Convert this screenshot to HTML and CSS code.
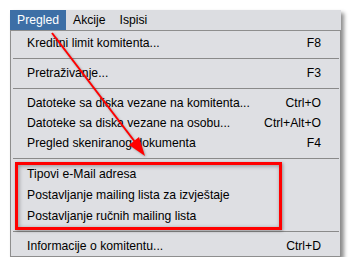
FILE: index.html
```html
<!DOCTYPE html>
<html lang="hr">
<head>
    <meta charset="UTF-8">
    <title>Pregled</title>
    <link rel="stylesheet" href="styles.css">
</head>
<body>
    <div class="window">
        <div class="menubar">
            <span class="menu active">Pregled</span>
            <span class="menu">Akcije</span>
            <span class="menu">Ispisi</span>
        </div>
        <div class="dropdown">
            <div class="item"><span>Kreditni limit komitenta...</span><span class="key">F8</span></div>
            <div class="sep"></div>
            <div class="item"><span>Pretraživanje...</span><span class="key">F3</span></div>
            <div class="sep"></div>
            <div class="item"><span>Datoteke sa diska vezane na komitenta...</span><span class="key">Ctrl+O</span></div>
            <div class="item"><span>Datoteke sa diska vezane na osobu...</span><span class="key">Ctrl+Alt+O</span></div>
            <div class="item"><span>Pregled skeniranog dokumenta</span><span class="key">F4</span></div>
            <div class="sep"></div>
            <div class="item tall"><span>Tipovi e-Mail adresa</span></div>
            <div class="item tall"><span>Postavljanje mailing lista za izvještaje</span></div>
            <div class="item tall"><span>Postavljanje ručnih mailing lista</span></div>
            <div class="sep"></div>
            <div class="item"><span>Informacije o komitentu...</span><span class="key">Ctrl+D</span></div>
        </div>
    </div>

    <!-- annotation overlay -->
    <div class="highlight"></div>
    <svg class="arrow" width="352" height="270" viewBox="0 0 352 270">
        <line x1="52" y1="33" x2="135" y2="142" stroke="#f00" stroke-width="2"/>
        <polygon points="145,156 129,145 139,137" fill="#f00"/>
    </svg>
</body>
</html>
```

FILE: styles.css
```css
body {
    margin: 0;
    background-color: #fff;
    font-family: "Liberation Sans", Arial, sans-serif;
    font-size: 12.2px;
    color: #000;
}

.window {
    width: 331px;
    margin: 10px 0 0 10px;
    background-color: #dedfe3;
    box-shadow: 3px 3px 4px rgba(0, 0, 0, 0.45);
}

.menubar {
    display: flex;
    height: 20px;
    border-bottom: 1px solid #8e8e8e;
    background-color: #dcdde1;
}

.menubar .menu {
    padding: 0 7px;
    line-height: 20px;
}

.menubar .menu.active {
    background-color: #3d6fa6;
    color: #fff;
}

.dropdown {
    padding-top: 2px;
    border-left: 1px solid #8e8e8e;
    border-right: 1px solid #8e8e8e;
    border-bottom: 1px solid #8e8e8e;
}

.dropdown .item {
    display: flex;
    justify-content: space-between;
    align-items: center;
    height: 20px;
    padding: 0 19px 0 16px;
}

.dropdown .item.tall {
    height: 21px;
}

.dropdown .sep {
    height: 1px;
    margin: 5px 1px 4px 2px;
    background-color: #8a8a8a;
}

.highlight {
    position: absolute;
    left: 15px;
    top: 162px;
    width: 267px;
    height: 68px;
    box-sizing: border-box;
    border: 3px solid #f00;
    box-shadow: inset 1px 1px 4px rgba(0, 0, 0, 0.35), 1px 1px 3px rgba(0, 0, 0, 0.35);
}

.arrow {
    position: absolute;
    left: 0;
    top: 0;
    pointer-events: none;
    filter: drop-shadow(1px 1px 1px rgba(0, 0, 0, 0.3));
}
```
